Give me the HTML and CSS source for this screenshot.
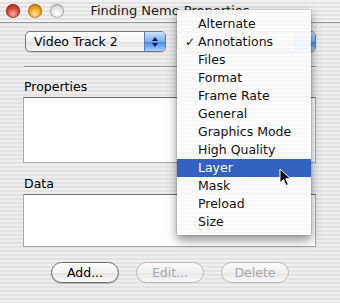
FILE: index.html
```html
<!DOCTYPE html>
<html lang="en">

<head>
    <meta name="viewport" content="width=device-width, initial-scale=1.0">
    <link rel="stylesheet" href="styles.css">
    <title>Finding Nemo Properties</title>
</head>

<body>
    <div class="window">
        <div class="titlebar">
            <span class="light red"></span>
            <span class="light yellow"></span>
            <span class="light off"></span>
            <span class="title">Finding Nemo Properties</span>
        </div>

        <div class="content">
            <div class="popups">
                <div class="popup track">
                    <span class="popup-text">Video Track 2</span>
                    <span class="popup-arrows">
                        <svg width="8" height="12" viewBox="0 0 8 12">
                            <path d="M4 1 L7 5 L1 5 Z M4 11 L7 7 L1 7 Z" fill="#0b1d3d"/>
                        </svg>
                    </span>
                </div>
                <!-- hidden under the open menu -->
                <div class="popup kind">
                    <span class="popup-text"></span>
                    <span class="popup-arrows"></span>
                </div>
            </div>

            <div class="sep"></div>

            <div class="label">Properties</div>
            <div class="box props"></div>

            <div class="label data-label">Data</div>
            <div class="box data"></div>

            <div class="buttons">
                <button class="pill">Add...</button>
                <button class="pill" disabled>Edit...</button>
                <button class="pill" disabled>Delete</button>
            </div>
        </div>

        <ul class="menu">
            <li><span class="check"></span>Alternate</li>
            <li><span class="check">&#10003;</span>Annotations</li>
            <li><span class="check"></span>Files</li>
            <li><span class="check"></span>Format</li>
            <li><span class="check"></span>Frame Rate</li>
            <li><span class="check"></span>General</li>
            <li><span class="check"></span>Graphics Mode</li>
            <li><span class="check"></span>High Quality</li>
            <li class="active"><span class="check"></span>Layer</li>
            <li><span class="check"></span>Mask</li>
            <li><span class="check"></span>Preload</li>
            <li><span class="check"></span>Size</li>
        </ul>

        <svg class="cursor" width="13" height="19" viewBox="0 0 13 19">
            <path d="M1 1 L1 15 L4.5 11.5 L7 17.5 L9.3 16.5 L6.8 10.7 L11.5 10.7 Z" fill="#000" stroke="#fff" stroke-width="1"/>
        </svg>
    </div>
</body>

</html>
```

FILE: styles.css
```css
body {
    margin: 0;
    padding: 0;
    font-family: "DejaVu Sans", sans-serif;
    font-size: 12.5px;
    color: #000;
}

.window {
    position: relative;
    width: 340px;
    height: 303px;
    overflow: hidden;
    background: repeating-linear-gradient(#eeeeee 0 2px, #e3e3e3 2px 4px);
}

/* title bar */

.titlebar {
    position: relative;
    display: flex;
    align-items: center;
    gap: 8px;
    height: 22px;
    padding-left: 6px;
    border-bottom: 1px solid #9c9c9c;
    background: repeating-linear-gradient(#f1f1f1 0 2px, #e2e2e2 2px 4px);
}

.light {
    width: 14px;
    height: 14px;
    border-radius: 50%;
    box-shadow: inset 0 0 0 1px rgba(0, 0, 0, 0.25);
}

.red {
    background: radial-gradient(circle at 50% 70%, #ffb3a8 0, #e0463b 45%, #a3140f 100%);
}

.yellow {
    background: radial-gradient(circle at 50% 70%, #ffe9a0 0, #f3a51d 45%, #b86a00 100%);
}

.off {
    background: radial-gradient(circle at 50% 70%, #ffffff 0, #e4e4e4 50%, #bdbdbd 100%);
}

.title {
    position: absolute;
    left: 0;
    right: 0;
    top: 3px;
    text-align: center;
    font-size: 13px;
    color: #1a1a1a;
}

/* body of the window */

.content {
    padding: 8px 24px 0 23px;
}

.popups {
    display: flex;
    gap: 11px;
}

.popup {
    display: flex;
    height: 19px;
    border: 1px solid #7b7b7b;
    border-radius: 5px;
    background: linear-gradient(#ffffff, #f1f1f1 50%, #e2e2e2 51%, #f6f6f6);
    overflow: hidden;
    box-shadow: 0 1px 1px rgba(0, 0, 0, 0.15);
}

.track {
    width: 139px;
    margin-left: 2px;
}

.kind {
    flex: 1;
}

.popup-text {
    flex: 1;
    padding-left: 8px;
    line-height: 19px;
}

.popup-arrows {
    display: flex;
    align-items: center;
    justify-content: center;
    width: 20px;
    border-left: 1px solid #5a7fb8;
    background: linear-gradient(#cfe2fb, #7aaef0 50%, #3f86e6 51%, #a9d0fb);
}

.sep {
    height: 0;
    margin: 14px 0 0 1px;
    border-top: 1px solid #8f8f8f;
    border-bottom: 1px solid #f8f8f8;
}

.label {
    margin: 10px 0 0 1px;
    line-height: 17px;
}

.data-label {
    margin-top: 12px;
}

.box {
    margin-top: 2px;
    background: #fff;
    border: 1px solid #a9a9a9;
    border-top-color: #6e6e6e;
}

.props {
    height: 64px;
}

.data {
    height: 51px;
}

.buttons {
    display: flex;
    justify-content: center;
    gap: 17px;
    margin: 15px 0 0 -23px;
    width: 340px;
}

.pill {
    width: 68px;
    height: 21px;
    padding: 0;
    font-family: "DejaVu Sans", sans-serif;
    font-size: 12.5px;
    color: #000;
    border: 1px solid #6c6c6c;
    border-radius: 11px;
    background: linear-gradient(#ffffff, #f3f3f3 50%, #e3e3e3 51%, #fbfbfb);
    box-shadow: 0 1px 1px rgba(0, 0, 0, 0.2);
}

.pill:disabled {
    color: #a8a8a8;
    border-color: #b8b8b8;
    box-shadow: none;
    background: linear-gradient(#fafafa, #efefef 50%, #e7e7e7 51%, #f7f7f7);
}

/* pop-up menu */

.menu {
    position: absolute;
    left: 177px;
    top: 10px;
    width: 134px;
    margin: 0;
    padding: 5px 0 4px;
    list-style: none;
    background: repeating-linear-gradient(rgba(255, 255, 255, 0.93) 0 2px, rgba(248, 248, 248, 0.93) 2px 4px);
    box-shadow: 0 5px 10px rgba(0, 0, 0, 0.45), 0 0 1px rgba(0, 0, 0, 0.5);
}

.menu li {
    display: flex;
    height: 18px;
    line-height: 18px;
    padding-left: 8px;
    color: #111;
}

.menu li.active {
    background: #3462c2;
    color: #fff;
}

.check {
    width: 13px;
    font-size: 12px;
}

.cursor {
    position: absolute;
    left: 279px;
    top: 168px;
}
```
